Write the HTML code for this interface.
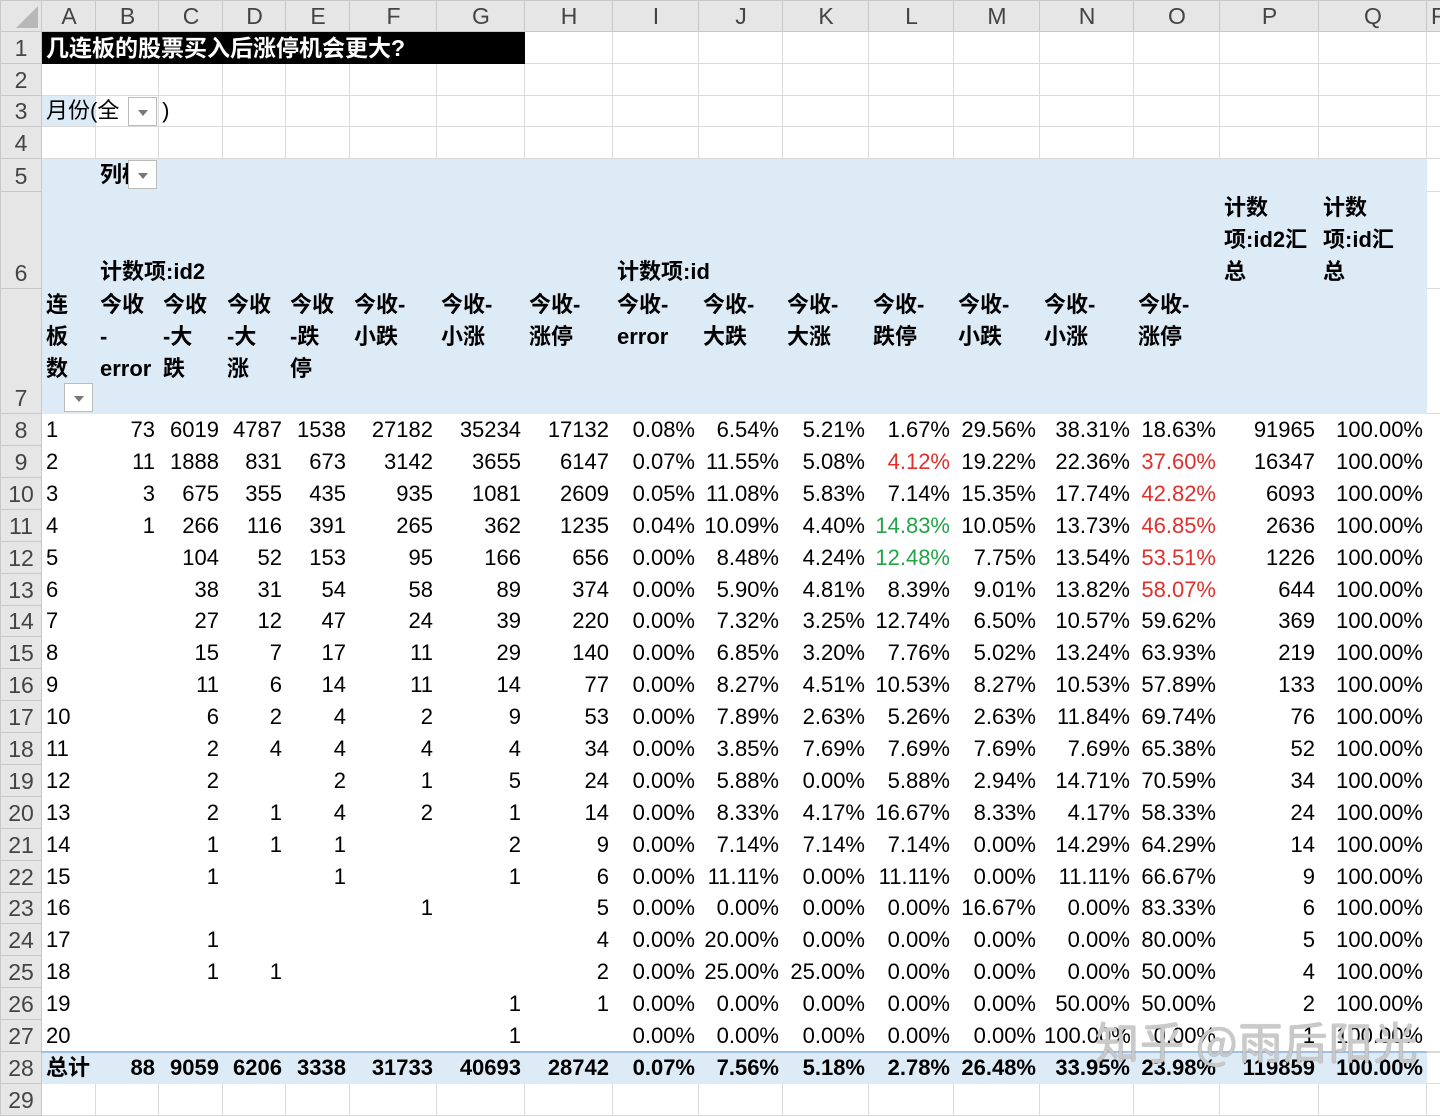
<!DOCTYPE html>
<html><head><meta charset="utf-8"><style>
*{margin:0;padding:0;box-sizing:border-box}
body{width:1440px;height:1096px;overflow:hidden;background:#fff;position:relative;font-family:"Liberation Sans","Noto Sans CJK SC",sans-serif;color:#000}
table{border-collapse:collapse;table-layout:fixed;position:absolute;left:0;top:0;width:1440px}
td{border:1px solid #dadada;font-size:22px;white-space:nowrap;overflow:visible;padding:0 3px 0 4px;vertical-align:bottom;line-height:30px;text-align:right}
td.l{text-align:left}
tr.ch td{background:#e6e6e6;color:#444;text-align:center;font-size:23px;border-color:#c8c8c8;vertical-align:middle;line-height:30px}
td.rh{background:#e6e6e6;color:#444;text-align:center;font-size:23px;border-color:#c8c8c8;padding:0}
tr.p td:not(.rh){border-color:#fff}
tr.b td:not(.rh){background:#ddebf7;border-color:#ddebf7}
tr.t td:not(.rh){background:#ddebf7;border-color:#ddebf7;border-top:2px solid #9bc2e6;font-weight:bold}
.h{font-weight:bold;text-align:left;line-height:32px;font-size:22px}
.r{color:#e0302c}.g{color:#22a447}
.dd{position:absolute;width:29px;height:29px;background:#fff;border:1px solid #bbb}
.dd:after{content:"";position:absolute;left:9px;top:12px;border-left:5px solid transparent;border-right:5px solid transparent;border-top:6px solid #777}
.wm{position:absolute;left:1095px;top:1008px;font-size:44px;color:rgba(255,255,255,.55);text-shadow:0 0 1px #888,0 0 1px #888;font-family:"Noto Sans CJK SC",sans-serif;letter-spacing:1px}
</style></head><body>
<table>
<colgroup><col style="width:41px"><col style="width:54px"><col style="width:63px"><col style="width:64px"><col style="width:63px"><col style="width:64px"><col style="width:87px"><col style="width:88px"><col style="width:88px"><col style="width:86px"><col style="width:84px"><col style="width:86px"><col style="width:85px"><col style="width:86px"><col style="width:94px"><col style="width:86px"><col style="width:99px"><col style="width:108px"><col style="width:14px"></colgroup>
<tr class="ch" style="height:31px"><td style="position:relative"><div style="position:absolute;right:3px;bottom:3px;border-left:22px solid transparent;border-bottom:22px solid #b8b8b8"></div></td><td>A</td><td>B</td><td>C</td><td>D</td><td>E</td><td>F</td><td>G</td><td>H</td><td>I</td><td>J</td><td>K</td><td>L</td><td>M</td><td>N</td><td>O</td><td>P</td><td>Q</td><td>R</td></tr>
<tr style="height:31.8px"><td class="rh">1</td><td colspan="7" class="l" style="background:#000;color:#fff;font-weight:bold;border-color:#000;font-size:23px">几连板的股票买入后涨停机会更大?</td><td></td><td></td><td></td><td></td><td></td><td></td><td></td><td></td><td></td><td></td><td></td></tr>
<tr style="height:31.8px"><td class="rh">2</td><td></td><td></td><td></td><td></td><td></td><td></td><td></td><td></td><td></td><td></td><td></td><td></td><td></td><td></td><td></td><td></td><td></td><td></td></tr>
<tr style="height:31.8px"><td class="rh">3</td><td class="l" style="background:#ddebf7;overflow:visible">月份(全&nbsp;&nbsp;&nbsp;&nbsp;&nbsp;&nbsp;&nbsp;)</td><td></td><td></td><td></td><td></td><td></td><td></td><td></td><td></td><td></td><td></td><td></td><td></td><td></td><td></td><td></td><td></td><td></td></tr>
<tr style="height:31.8px"><td class="rh">4</td><td></td><td></td><td></td><td></td><td></td><td></td><td></td><td></td><td></td><td></td><td></td><td></td><td></td><td></td><td></td><td></td><td></td><td></td></tr>
<tr class="b" style="height:31.8px"><td class="rh">5</td><td></td><td class="h">列标</td><td></td><td></td><td></td><td></td><td></td><td></td><td></td><td></td><td></td><td></td><td></td><td></td><td></td><td></td><td></td><td style="background:#fff;border-color:#dadada"></td></tr>
<tr class="b" style="height:96px"><td class="rh">6</td><td></td><td class="h" colspan="3">计数项:id2</td><td></td><td></td><td></td><td></td><td class="h" colspan="2">计数项:id</td><td></td><td></td><td></td><td></td><td></td><td class="h">计数<br>项:id2汇<br>总</td><td class="h">计数<br>项:id汇<br>总</td><td style="background:#fff;border-color:#dadada"></td></tr>
<tr class="b" style="height:125px"><td class="rh">7</td><td class="h" style="vertical-align:top">连<br>板<br>数</td><td class="h" style="vertical-align:top">今收<br>-<br>error</td><td class="h" style="vertical-align:top">今收<br>-大<br>跌</td><td class="h" style="vertical-align:top">今收<br>-大<br>涨</td><td class="h" style="vertical-align:top">今收<br>-跌<br>停</td><td class="h" style="vertical-align:top">今收-<br>小跌</td><td class="h" style="vertical-align:top">今收-<br>小涨</td><td class="h" style="vertical-align:top">今收-<br>涨停</td><td class="h" style="vertical-align:top">今收-<br>error</td><td class="h" style="vertical-align:top">今收-<br>大跌</td><td class="h" style="vertical-align:top">今收-<br>大涨</td><td class="h" style="vertical-align:top">今收-<br>跌停</td><td class="h" style="vertical-align:top">今收-<br>小跌</td><td class="h" style="vertical-align:top">今收-<br>小涨</td><td class="h" style="vertical-align:top">今收-<br>涨停</td><td></td><td></td><td style="background:#fff;border-color:#dadada"></td></tr>
<tr class="p" style="height:31.9px"><td class="rh">8</td><td class="l">1</td><td>73</td><td>6019</td><td>4787</td><td>1538</td><td>27182</td><td>35234</td><td>17132</td><td>0.08%</td><td>6.54%</td><td>5.21%</td><td>1.67%</td><td>29.56%</td><td>38.31%</td><td>18.63%</td><td>91965</td><td>100.00%</td><td></td></tr>
<tr class="p" style="height:31.9px"><td class="rh">9</td><td class="l">2</td><td>11</td><td>1888</td><td>831</td><td>673</td><td>3142</td><td>3655</td><td>6147</td><td>0.07%</td><td>11.55%</td><td>5.08%</td><td class="r">4.12%</td><td>19.22%</td><td>22.36%</td><td class="r">37.60%</td><td>16347</td><td>100.00%</td><td></td></tr>
<tr class="p" style="height:31.9px"><td class="rh">10</td><td class="l">3</td><td>3</td><td>675</td><td>355</td><td>435</td><td>935</td><td>1081</td><td>2609</td><td>0.05%</td><td>11.08%</td><td>5.83%</td><td>7.14%</td><td>15.35%</td><td>17.74%</td><td class="r">42.82%</td><td>6093</td><td>100.00%</td><td></td></tr>
<tr class="p" style="height:31.9px"><td class="rh">11</td><td class="l">4</td><td>1</td><td>266</td><td>116</td><td>391</td><td>265</td><td>362</td><td>1235</td><td>0.04%</td><td>10.09%</td><td>4.40%</td><td class="g">14.83%</td><td>10.05%</td><td>13.73%</td><td class="r">46.85%</td><td>2636</td><td>100.00%</td><td></td></tr>
<tr class="p" style="height:31.9px"><td class="rh">12</td><td class="l">5</td><td></td><td>104</td><td>52</td><td>153</td><td>95</td><td>166</td><td>656</td><td>0.00%</td><td>8.48%</td><td>4.24%</td><td class="g">12.48%</td><td>7.75%</td><td>13.54%</td><td class="r">53.51%</td><td>1226</td><td>100.00%</td><td></td></tr>
<tr class="p" style="height:31.9px"><td class="rh">13</td><td class="l">6</td><td></td><td>38</td><td>31</td><td>54</td><td>58</td><td>89</td><td>374</td><td>0.00%</td><td>5.90%</td><td>4.81%</td><td>8.39%</td><td>9.01%</td><td>13.82%</td><td class="r">58.07%</td><td>644</td><td>100.00%</td><td></td></tr>
<tr class="p" style="height:31.9px"><td class="rh">14</td><td class="l">7</td><td></td><td>27</td><td>12</td><td>47</td><td>24</td><td>39</td><td>220</td><td>0.00%</td><td>7.32%</td><td>3.25%</td><td>12.74%</td><td>6.50%</td><td>10.57%</td><td>59.62%</td><td>369</td><td>100.00%</td><td></td></tr>
<tr class="p" style="height:31.9px"><td class="rh">15</td><td class="l">8</td><td></td><td>15</td><td>7</td><td>17</td><td>11</td><td>29</td><td>140</td><td>0.00%</td><td>6.85%</td><td>3.20%</td><td>7.76%</td><td>5.02%</td><td>13.24%</td><td>63.93%</td><td>219</td><td>100.00%</td><td></td></tr>
<tr class="p" style="height:31.9px"><td class="rh">16</td><td class="l">9</td><td></td><td>11</td><td>6</td><td>14</td><td>11</td><td>14</td><td>77</td><td>0.00%</td><td>8.27%</td><td>4.51%</td><td>10.53%</td><td>8.27%</td><td>10.53%</td><td>57.89%</td><td>133</td><td>100.00%</td><td></td></tr>
<tr class="p" style="height:31.9px"><td class="rh">17</td><td class="l">10</td><td></td><td>6</td><td>2</td><td>4</td><td>2</td><td>9</td><td>53</td><td>0.00%</td><td>7.89%</td><td>2.63%</td><td>5.26%</td><td>2.63%</td><td>11.84%</td><td>69.74%</td><td>76</td><td>100.00%</td><td></td></tr>
<tr class="p" style="height:31.9px"><td class="rh">18</td><td class="l">11</td><td></td><td>2</td><td>4</td><td>4</td><td>4</td><td>4</td><td>34</td><td>0.00%</td><td>3.85%</td><td>7.69%</td><td>7.69%</td><td>7.69%</td><td>7.69%</td><td>65.38%</td><td>52</td><td>100.00%</td><td></td></tr>
<tr class="p" style="height:31.9px"><td class="rh">19</td><td class="l">12</td><td></td><td>2</td><td></td><td>2</td><td>1</td><td>5</td><td>24</td><td>0.00%</td><td>5.88%</td><td>0.00%</td><td>5.88%</td><td>2.94%</td><td>14.71%</td><td>70.59%</td><td>34</td><td>100.00%</td><td></td></tr>
<tr class="p" style="height:31.9px"><td class="rh">20</td><td class="l">13</td><td></td><td>2</td><td>1</td><td>4</td><td>2</td><td>1</td><td>14</td><td>0.00%</td><td>8.33%</td><td>4.17%</td><td>16.67%</td><td>8.33%</td><td>4.17%</td><td>58.33%</td><td>24</td><td>100.00%</td><td></td></tr>
<tr class="p" style="height:31.9px"><td class="rh">21</td><td class="l">14</td><td></td><td>1</td><td>1</td><td>1</td><td></td><td>2</td><td>9</td><td>0.00%</td><td>7.14%</td><td>7.14%</td><td>7.14%</td><td>0.00%</td><td>14.29%</td><td>64.29%</td><td>14</td><td>100.00%</td><td></td></tr>
<tr class="p" style="height:31.9px"><td class="rh">22</td><td class="l">15</td><td></td><td>1</td><td></td><td>1</td><td></td><td>1</td><td>6</td><td>0.00%</td><td>11.11%</td><td>0.00%</td><td>11.11%</td><td>0.00%</td><td>11.11%</td><td>66.67%</td><td>9</td><td>100.00%</td><td></td></tr>
<tr class="p" style="height:31.9px"><td class="rh">23</td><td class="l">16</td><td></td><td></td><td></td><td></td><td>1</td><td></td><td>5</td><td>0.00%</td><td>0.00%</td><td>0.00%</td><td>0.00%</td><td>16.67%</td><td>0.00%</td><td>83.33%</td><td>6</td><td>100.00%</td><td></td></tr>
<tr class="p" style="height:31.9px"><td class="rh">24</td><td class="l">17</td><td></td><td>1</td><td></td><td></td><td></td><td></td><td>4</td><td>0.00%</td><td>20.00%</td><td>0.00%</td><td>0.00%</td><td>0.00%</td><td>0.00%</td><td>80.00%</td><td>5</td><td>100.00%</td><td></td></tr>
<tr class="p" style="height:31.9px"><td class="rh">25</td><td class="l">18</td><td></td><td>1</td><td>1</td><td></td><td></td><td></td><td>2</td><td>0.00%</td><td>25.00%</td><td>25.00%</td><td>0.00%</td><td>0.00%</td><td>0.00%</td><td>50.00%</td><td>4</td><td>100.00%</td><td></td></tr>
<tr class="p" style="height:31.9px"><td class="rh">26</td><td class="l">19</td><td></td><td></td><td></td><td></td><td></td><td>1</td><td>1</td><td>0.00%</td><td>0.00%</td><td>0.00%</td><td>0.00%</td><td>0.00%</td><td>50.00%</td><td>50.00%</td><td>2</td><td>100.00%</td><td></td></tr>
<tr class="p" style="height:31.9px"><td class="rh">27</td><td class="l">20</td><td></td><td></td><td></td><td></td><td></td><td>1</td><td></td><td>0.00%</td><td>0.00%</td><td>0.00%</td><td>0.00%</td><td>0.00%</td><td>100.00%</td><td>0.00%</td><td>1</td><td>100.00%</td><td></td></tr>
<tr class="t" style="height:31.9px"><td class="rh">28</td><td class="l">总计</td><td>88</td><td>9059</td><td>6206</td><td>3338</td><td>31733</td><td>40693</td><td>28742</td><td>0.07%</td><td>7.56%</td><td>5.18%</td><td>2.78%</td><td>26.48%</td><td>33.95%</td><td>23.98%</td><td>119859</td><td>100.00%</td><td style="background:#fff;border-color:#dadada"></td></tr>
<tr style="height:31.9px"><td class="rh">29</td><td></td><td></td><td></td><td></td><td></td><td></td><td></td><td></td><td></td><td></td><td></td><td></td><td></td><td></td><td></td><td></td><td></td><td></td></tr>
</table>
<div class="dd" style="left:128px;top:97px"></div>
<div class="dd" style="left:128px;top:160px"></div>
<div class="dd" style="left:64px;top:383px"></div>
<div class="wm">知乎 @雨后阳光</div>
</body></html>
